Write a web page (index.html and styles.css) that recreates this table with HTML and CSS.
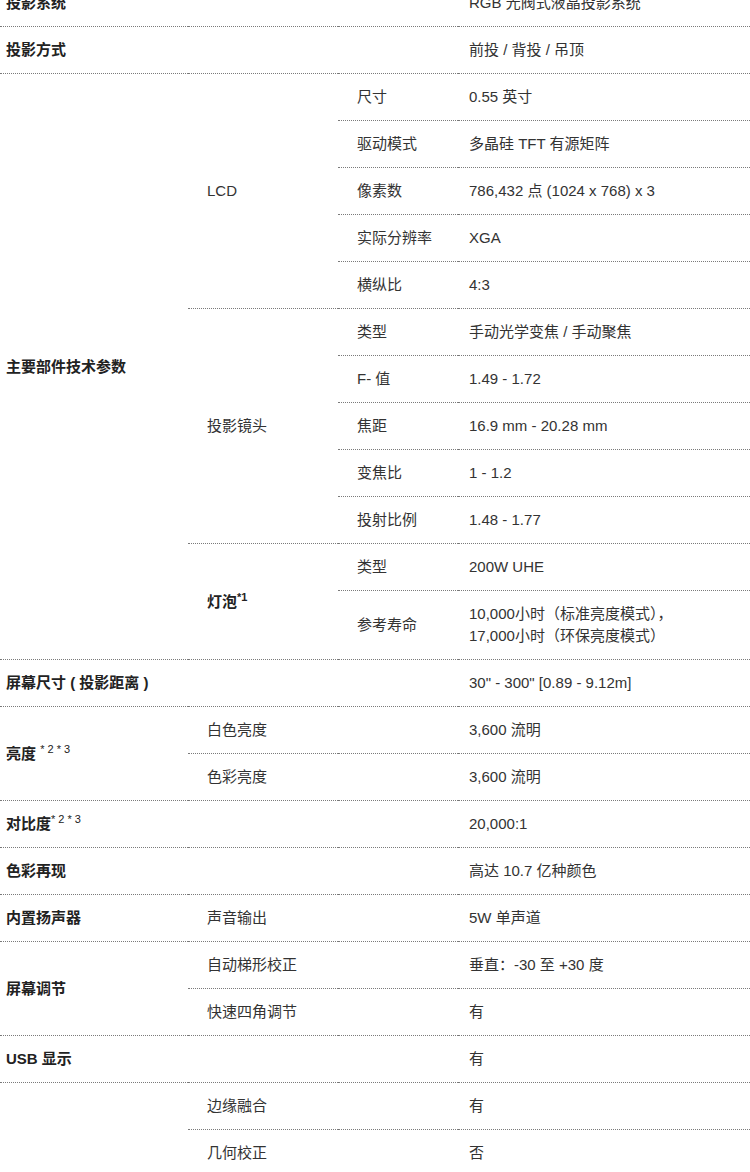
FILE: index.html
```html
<!DOCTYPE html>
<html lang="zh-CN">
<head>
<meta charset="utf-8">
<title>规格参数</title>
<link rel="stylesheet" href="styles.css">
</head>
<body>
<table class="spec">
  <colgroup>
    <col class="c1"><col class="c2"><col class="c3"><col class="c4">
  </colgroup>
  <tbody>
    <tr><th class="k1">投影系统</th><td colspan="2"></td><td class="v">RGB 光阀式液晶投影系统</td></tr>
    <tr><th class="k1">投影方式</th><td colspan="2"></td><td class="v">前投 / 背投 / 吊顶</td></tr>

    <tr><th class="k1" rowspan="12">主要部件技术参数</th><td class="k2" rowspan="5">LCD</td><td class="k3">尺寸</td><td class="v">0.55 英寸</td></tr>
    <tr><td class="k3">驱动模式</td><td class="v">多晶硅 TFT 有源矩阵</td></tr>
    <tr><td class="k3">像素数</td><td class="v">786,432 点 (1024 x 768) x 3</td></tr>
    <tr><td class="k3">实际分辨率</td><td class="v">XGA</td></tr>
    <tr><td class="k3">横纵比</td><td class="v">4:3</td></tr>
    <tr><td class="k2" rowspan="5">投影镜头</td><td class="k3">类型</td><td class="v">手动光学变焦 / 手动聚焦</td></tr>
    <tr><td class="k3">F- 值</td><td class="v">1.49 - 1.72</td></tr>
    <tr><td class="k3">焦距</td><td class="v">16.9 mm - 20.28 mm</td></tr>
    <tr><td class="k3">变焦比</td><td class="v">1 - 1.2</td></tr>
    <tr><td class="k3">投射比例</td><td class="v">1.48 - 1.77</td></tr>
    <tr><td class="k2 bold" rowspan="2">灯泡<sup class="note-b">*1</sup></td><td class="k3">类型</td><td class="v">200W UHE</td></tr>
    <tr><td class="k3">参考寿命</td><td class="v">10,000小时（标准亮度模式），<br>17,000小时（环保亮度模式）</td></tr>

    <tr><th class="k1">屏幕尺寸 ( 投影距离 )</th><td colspan="2"></td><td class="v">30" - 300" [0.89 - 9.12m]</td></tr>

    <tr><th class="k1" rowspan="2">亮度 <sup class="note">* 2 * 3</sup></th><td class="k2" colspan="2">白色亮度</td><td class="v">3,600 流明</td></tr>
    <tr><td class="k2" colspan="2">色彩亮度</td><td class="v">3,600 流明</td></tr>

    <tr><th class="k1">对比度<sup class="note">* 2 * 3</sup></th><td colspan="2"></td><td class="v">20,000:1</td></tr>
    <tr><th class="k1">色彩再现</th><td colspan="2"></td><td class="v">高达 10.7 亿种颜色</td></tr>
    <tr><th class="k1">内置扬声器</th><td class="k2" colspan="2">声音输出</td><td class="v">5W 单声道</td></tr>

    <tr><th class="k1" rowspan="2">屏幕调节</th><td class="k2" colspan="2">自动梯形校正</td><td class="v">垂直：-30 至 +30 度</td></tr>
    <tr><td class="k2" colspan="2">快速四角调节</td><td class="v">有</td></tr>

    <tr><th class="k1">USB 显示</th><td colspan="2"></td><td class="v">有</td></tr>

    <tr><th class="k1" rowspan="3"></th><td class="k2" colspan="2">边缘融合</td><td class="v">有</td></tr>
    <tr><td class="k2" colspan="2">几何校正</td><td class="v">否</td></tr>
    <tr><td class="k2" colspan="2">&nbsp;</td><td class="v">&nbsp;</td></tr>
  </tbody>
</table>
</body>
</html>
```

FILE: styles.css
```css
html, body {
  margin: 0;
  padding: 0;
  background: #fff;
}

body {
  font-family: "Liberation Sans", "Noto Sans CJK SC", sans-serif;
  font-size: 15px;
  color: #333;
  overflow: hidden;
}

.spec {
  width: 750px;
  table-layout: fixed;
  border-collapse: collapse;
  margin-top: -20px;
}

.c1 { width: 188px; }
.c2 { width: 150px; }
.c3 { width: 120px; }
.c4 { width: 292px; }

.spec th,
.spec td {
  border-bottom: 1px dotted #7a7a7a;
  padding: 12px 0;
  line-height: 22px;
  text-align: left;
  vertical-align: middle;
  font-weight: normal;
}

.spec th.k1 {
  padding-left: 6px;
  font-weight: bold;
  color: #222;
}

.spec .k2 {
  padding-left: 19px;
}

.spec .k3 {
  padding-left: 19px;
}

.spec .v {
  padding-left: 11px;
}

.spec .bold {
  font-weight: bold;
  color: #222;
}

.note,
.note-b {
  font-size: 11px;
  line-height: 0;
  vertical-align: 6px;
  font-weight: normal;
}

.note-b {
  font-weight: bold;
}
```
